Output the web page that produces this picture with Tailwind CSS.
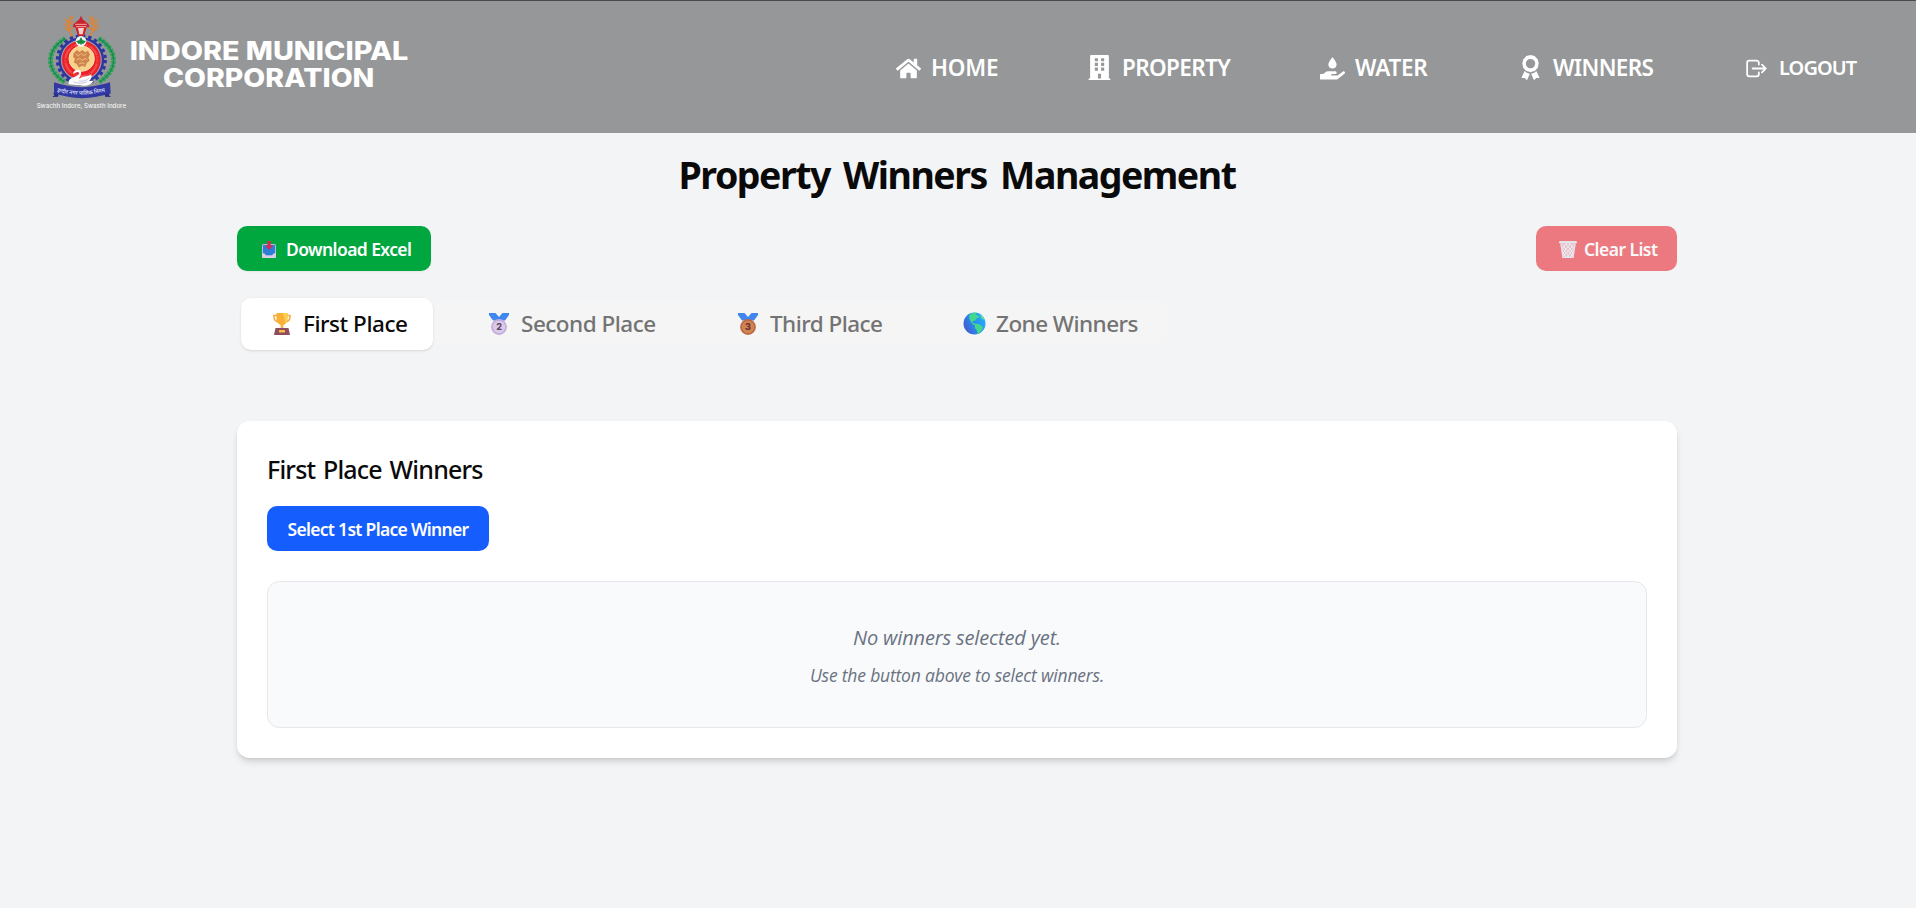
<!DOCTYPE html>
<html lang="en">
<head>
<meta charset="utf-8">
<title>Property Winners Management</title>
<script src="https://cdn.jsdelivr.net/npm/@tailwindcss/browser@4"></script>
</head>
<body class="min-h-screen overflow-hidden bg-gray-100 font-['Noto_Sans','Open_Sans',sans-serif] text-neutral-950">

<header class="flex h-[133px] items-center justify-between border-t border-[#4b4b4d] bg-[#969798] pr-[59px] pl-5 font-semibold text-white">
  <svg class="h-[132px] w-[400px] shrink-0" viewBox="0 3 1200 396" role="img" aria-label="Indore Municipal Corporation">
    <!-- wheat ears -->
    <g fill="none" stroke="#d9853b" stroke-width="5" stroke-linecap="round">
      <path d="M155 108Q140 80 152 50M146 92l-10-9M144 80l-10-9M145 68l-8-10M148 92l12-10M146 76l12-10M149 62l9-10"/>
      <path d="M211 108Q230 80 216 50M222 92l11-9M224 80l10-9M223 68l8-10M219 92l-12-10M221 76l-12-10M218 62l-9-10"/>
    </g>
    <!-- laurel -->
    <g fill="none" stroke="#2fa45c" stroke-width="15" stroke-dasharray="9 3">
      <path d="M136 116C82 146 72 206 134 246"/>
      <path d="M236 116C290 146 300 206 238 246"/>
    </g>
    <g fill="none" stroke="#168a49" stroke-width="4">
      <path d="M136 116C82 146 72 206 134 246M236 116C290 146 300 206 238 246"/>
    </g>
    <!-- gear and rings -->
    <circle cx="184" cy="180" r="72" fill="none" stroke="#2e35a0" stroke-width="9" stroke-dasharray="10 8.85"/>
    <circle cx="184" cy="180" r="65" fill="#9a9bb0" stroke="#2e35a0" stroke-width="7"/>
    <circle cx="184" cy="180" r="58" fill="#ee2027"/>
    <circle cx="184" cy="180" r="48" fill="none" stroke="#f7b0a4" stroke-width="6" stroke-dasharray="4 3 2 2 30 0 4 3" opacity=".3"/>
    <circle cx="185" cy="176" r="38" fill="#f6d28a" stroke="#f7e3b0" stroke-width="3"/>
    <path d="M161 160l10-10 8 6 8-6 8 7 9-5 6 12-5 9 4 9-9 7-4 12-10-4-9 6-7-11-9-5 4-10-6-7z" fill="#cf8450"/>
    <path d="M168 162l7 6 8-8 8 7 9-6M170 180l9-5 8 6 9-6 6 5M177 192l9-4 8 4" fill="none" stroke="#f1c079" stroke-width="3"/>
    <circle cx="183" cy="124" r="16" fill="#f4f5f2"/>
    <path d="M183 111l5 10 10 2-7 8h-16l-7-8 10-2z" fill="#158b45"/>
    <path d="M183 125v10" stroke="#158b45" stroke-width="3"/>
    <!-- lantern -->
    <path d="M183 47l5 11 17 14 4 9-9 1-8 26h-18l-8-26-8-1 3-9 17-14z" fill="#c9232e"/>
    <path d="M166 73h34M168 80h31" stroke="#f0aaa9" stroke-width="3"/>
    <path d="M174 84h18l-4 19h-10z" fill="#f5cfcb"/>
    <!-- swan -->
    <path d="M146 253c-3-18 13-20 24-25 9-5 9-11 3-12-5 0-6 4-14 5 2-12 17-15 23-7 5 9-4 16-4 22 14-10 26-5 36-13 2 11-2 17-7 20l13-1c-3 9-16 15-28 15z" fill="#fdfdff"/>
    <path d="M177 243c10 2 22-1 29-8M160 245c10 6 30 6 42 0" fill="none" stroke="#b6bbd9" stroke-width="2.500"/>
    <!-- ribbon -->
    <path d="M99 280l16-4v14l-18 1 7-6zM271 280l-16-4v14l18 1-7-6z" fill="#242b87"/>
    <path d="M102 247q82 29 168 0l2 33q-86 29-170 0z" fill="#3138a3"/>
    <path id="ribbon" d="M111 275q74 19 148-1" fill="none"/>
    <text font-family="Noto Sans, sans-serif" font-weight="600" font-size="17" fill="#d5d8f2"><textPath href="#ribbon" textLength="146" lengthAdjust="spacingAndGlyphs">इन्दौर नगर पालिक निगम</textPath></text>
    <text x="50" y="323" textLength="268" lengthAdjust="spacingAndGlyphs" font-family="Inter, sans-serif" font-weight="500" font-size="18" fill="#f3f3f3">Swachh Indore, Swasth Indore</text>
    <g font-family="Inter, sans-serif" font-weight="800" font-size="76.500" fill="#fff">
      <text x="329" y="180" textLength="836" lengthAdjust="spacingAndGlyphs">INDORE MUNICIPAL</text>
      <text x="429" y="262" textLength="634" lengthAdjust="spacingAndGlyphs">CORPORATION</text>
    </g>
  </svg>

  <nav class="flex items-center gap-[89px] text-[22.5px] leading-[34px] whitespace-nowrap">
    <a class="flex w-[102px] items-center gap-2.5">
      <svg class="mt-0.5 size-[25px] shrink-0" viewBox="0 0 576 512" fill="currentColor"><path d="M280.370 148.260L96 300.110V464a16 16 0 0 0 16 16l112.060-.29a16 16 0 0 0 15.920-16V368a16 16 0 0 1 16-16h64a16 16 0 0 1 16 16v95.640a16 16 0 0 0 16 16.050L464 480a16 16 0 0 0 16-16V300L295.670 148.260a12.190 12.190 0 0 0-15.300 0zM571.600 251.470L488 182.560V44.050a12 12 0 0 0-12-12h-56a12 12 0 0 0-12 12v72.610L318.470 43a48 48 0 0 0-61 0L4.340 251.470a12 12 0 0 0-1.600 16.900l25.500 31A12 12 0 0 0 45.150 301l235.220-193.740a12.190 12.190 0 0 1 15.300 0L530.900 301a12 12 0 0 0 16.900-1.600l25.500-31a12 12 0 0 0-1.700-16.930z"/></svg>
      <span class="pt-0.5 tracking-[-0.21px]">HOME</span>
    </a>
    <a class="flex w-[144px] items-center gap-2.5">
      <svg class="size-[25px] shrink-0" viewBox="0 0 448 512" fill="currentColor" fill-rule="evenodd"><path d="M436 480h-20V24c0-13.300-10.700-24-24-24H56C42.700 0 32 10.700 32 24v456H12c-6.600 0-12 5.400-12 12v20h448v-20c0-6.600-5.400-12-12-12zM128 64h64v64h-64zM256 64h64v64h-64zM128 160h64v64h-64zM256 160h64v64h-64zM128 256h64v64h-64zM256 256h64v64h-64zM192 384h64v96h-64z"/></svg>
      <span class="pt-0.5 tracking-[-0.63px]">PROPERTY</span>
    </a>
    <a class="flex w-[109px] items-center gap-2.5">
      <svg class="mt-0.5 size-[25px] shrink-0" viewBox="0 0 576 512" fill="currentColor"><path d="M288 256c53 0 96-42.100 96-94 0-40-57.100-120.700-83.200-155.600-6.400-8.500-19.200-8.500-25.600 0C249.100 41.300 192 122 192 162c0 51.900 43 94 96 94zm277.300 72.100c-11.800-10.700-30.200-10-42.600 0L430.300 402c-11.300 9.100-25.400 14-40 14H272c-8.800 0-16-7.200-16-16s7.200-16 16-16h78.300c16 0 30.700-10.900 33.300-26.600 3.200-20-12.100-37.400-31.600-37.400H192c-27 0-53.100 9.300-74.100 26.300L71.400 384H16c-8.800 0-16 7.200-16 16v96c0 8.800 7.200 16 16 16h356.800c14.500 0 28.600-4.900 40-14L564 377c15.200-12.100 16.400-35.300 1.300-48.900z"/></svg>
      <span class="pt-0.5 tracking-[-0.3px]">WATER</span>
    </a>
    <a class="flex w-[137px] items-center gap-2.5">
      <svg class="size-[25px] shrink-0" viewBox="0 0 384 512" fill="currentColor"><path fill-rule="evenodd" d="M192 0l42 12 44 11 30 32 31 32 11 43 11 46-11 46-11 43-31 32-30 32-44 11-42 12-42-12-44-11-30-32-31-32-11-43-11-46 11-46 11-43 31-32 30-32 44-11zM192 80a96 96 0 1 0 0 192 96 96 0 1 0 0-192z"/><path d="M72 328l40 36 66 18-50 122c-3 9-12 10-18 3l-35-37-50 2c-11 1-17-8-13-18zM312 328l-40 36-66 18 50 122c3 9 12 10 18 3l35-37 50 2c11 1 17-8 13-18z"/></svg>
      <span class="pt-0.5 tracking-[-0.66px]">WINNERS</span>
    </a>
    <a class="flex w-[113px] items-center gap-2.5 text-xl leading-[34px]">
      <svg class="mt-0.5 size-[25px] shrink-0" viewBox="0 0 512 512" fill="none" stroke="currentColor" stroke-width="36" stroke-linecap="round" stroke-linejoin="round"><path d="M304 336v40a40 40 0 0 1-40 40H104a40 40 0 0 1-40-40V136a40 40 0 0 1 40-40h152c22 0 48 18 48 40v40M368 336l80-80-80-80M176 256h256"/></svg>
      <span class="pt-px tracking-[-0.92px]">LOGOUT</span>
    </a>
  </nav>
</header>

<main class="ml-[237px] w-[1440px] pt-[19px] whitespace-nowrap">
  <h1 class="text-center text-[37.5px] leading-[45px] font-bold tracking-[-1.5px] [word-spacing:5px]">Property Winners Management</h1>

  <div class="mt-[29px] flex justify-between text-[17.5px] leading-[25px] font-semibold text-white">
    <button class="flex h-[45px] w-[194px] items-center gap-2.5 rounded-[10px] bg-[#00a63e] pl-[25px] shadow-xs">
      <svg class="mt-0.5 h-[17px] w-[14px] shrink-0" viewBox="0 0 14 17">
        <rect x="0" y="3" width="14" height="14" rx="1.500" fill="#c5b5d8"/>
        <path d="M1 4h12v8l-2.500 2.500h-7L1 12z" fill="#2b7fd8"/>
        <path d="M0 12.500h2.500L4 14.500h6l1.500-2H14V15.500a1.500 1.500 0 0 1-1.500 1.500h-11A1.500 1.500 0 0 1 0 15.500z" fill="#d9cde8"/>
        <path d="M5.500 0h3.200v4.500H11L7.100 9 3.200 4.500h2.300z" fill="#d62a50"/>
      </svg>
      <span class="pt-0.5 tracking-[-0.59px]">Download Excel</span>
    </button>
    <button class="flex h-[45px] w-[141px] items-center gap-[7px] rounded-[10px] bg-[#e7000b] pl-[23px] opacity-50">
      <svg class="mt-0.5 h-[17px] w-[18px] shrink-0" viewBox="0 0 18 17">
        <path d="M1.500 2h15l-2 15h-11z" fill="#c9bfd2" fill-opacity=".75"/>
        <path d="M3.500 4l3.500 4-3 4 3.500 4.500M7 3l4 5-3.500 4.500 3 4M11 3l3.500 4-3.500 5 2.500 3M14.500 4L11 8l2.800 4-2.300 4M11 3L7 8l4 4.500-3.500 4M7 3L3.500 7 7 12l-2.500 3" fill="none" stroke="#f4f1f7" stroke-width=".9"/>
        <path d="M2 3l2 13.500h10L16 3" fill="none" stroke="#dcd6e2" stroke-width="1.300"/>
        <rect x="0" y="0" width="18" height="2.500" rx="1.200" fill="#d8d2de"/>
      </svg>
      <span class="pt-0.5 tracking-[-0.55px]">Clear List</span>
    </button>
  </div>

  <div class="mt-[30px] flex h-[45px] w-[931px] items-center gap-6 rounded-[12.5px] bg-neutral-100 pl-1 text-[22.5px] leading-8 font-medium text-neutral-500">
    <button class="flex h-[52px] w-48 shrink-0 items-center gap-3 rounded-[10px] bg-white pl-8 text-neutral-950 shadow-sm">
      <svg class="h-[22px] w-[18px] shrink-0" viewBox="0 0 18 22">
        <path d="M4 2.500H1Q.5 8 5.500 9M14 2.500h3Q17.500 8 12.500 9" fill="none" stroke="#f9a63a" stroke-width="1.500"/>
        <path d="M3.500 0h11v5.500c0 4-2.500 6-4.200 6.500v3h-2.600v-3C6 11.500 3.500 9.500 3.500 5.500z" fill="#f9b035"/>
        <path d="M9.500 0h5v5.500c0 2.500-1 4.500-2.500 5.500 0-4-1-8-2.500-11z" fill="#fbd052"/>
        <path d="M2.500 15h13L17 22H1z" fill="#8f4c5d"/>
        <rect x="6" y="17" width="6" height="2.500" rx=".5" fill="#f6c04c"/>
      </svg>
      <span class="tracking-[-0.46px]">First Place</span>
    </button>
    <button class="flex h-[52px] w-[225px] shrink-0 items-center gap-3 pl-8">
      <svg class="h-[22px] w-5 shrink-0" viewBox="0 0 20 22">
        <path d="M0 0h6.500L10 4l3.500-4H20v2l-4 5.500H4L0 2z" fill="#3f87ee"/>
        <circle cx="10" cy="14" r="7.900" fill="#c5a9df"/><circle cx="10" cy="14" r="6.200" fill="#d9cbe6"/>
        <text x="10" y="17.400" text-anchor="middle" font-family="Inter, sans-serif" font-weight="800" font-size="9" fill="#5c4868">2</text>
      </svg>
      <span class="tracking-[-0.5px]">Second Place</span>
    </button>
    <button class="flex h-[52px] w-[201px] shrink-0 items-center gap-3 pl-8">
      <svg class="h-[22px] w-5 shrink-0" viewBox="0 0 20 22">
        <path d="M0 0h6.500L10 4l3.500-4H20v2l-4 5.500H4L0 2z" fill="#3f87ee"/>
        <circle cx="10" cy="14" r="7.900" fill="#bd6a45"/><circle cx="10" cy="14" r="6.200" fill="#cf8550"/>
        <text x="10" y="17.400" text-anchor="middle" font-family="Inter, sans-serif" font-weight="800" font-size="9" fill="#6f3036">3</text>
      </svg>
      <span class="tracking-[-0.54px]">Third Place</span>
    </button>
    <button class="flex h-[52px] w-[233px] shrink-0 items-center gap-2.5 pl-8">
      <svg class="size-[23px] shrink-0" viewBox="0 0 23 23">
        <defs><linearGradient id="sea" x1="1" y1=".3" x2="0" y2=".8"><stop offset="0" stop-color="#22b2ff"/><stop offset=".6" stop-color="#2f7fe8"/><stop offset="1" stop-color="#4a55c8"/></linearGradient></defs>
        <circle cx="11.500" cy="11.500" r="11" fill="url(#sea)"/>
        <path d="M8 1.500C10 .6 12 .5 14 .8l-1.500 1.900 3 .8.5 2-2.500 1-1 2-2.500.5-.5 1.500 2 1 3 .3 3.500 1.500 2 2-1.500 3.500-2.500 2.700-1.500.5-.8-4-2-2.200.3-2.500-2.500-1.300-1.700-2.500L6.500 7 6 4z" fill="#43d68f"/>
        <path d="M16.500 2l3.500 2.800L21.500 8l-3-1.500z" fill="#5be39a"/>
      </svg>
      <span class="tracking-[-0.54px]">Zone Winners</span>
    </button>
  </div>

  <section class="mt-[75px] h-[337px] rounded-[12.5px] bg-white p-[30px] shadow-[0_5px_7px_-1px_rgba(0,0,0,0.12),0_2px_5px_-2px_rgba(0,0,0,0.12)]">
    <h2 class="text-[25px] leading-9 font-medium tracking-[-0.8px] [word-spacing:2px]">First Place Winners</h2>
    <button class="mt-[19px] flex h-[45px] w-[222px] items-center justify-center rounded-[10px] bg-[#155dfc] text-[17.5px] leading-[25px] font-semibold text-white"><span class="pt-px tracking-[-0.7px]">Select 1st Place Winner</span></button>
    <div class="mt-[30px] h-[147px] rounded-[12.5px] border border-gray-200 bg-gray-50 pt-[41px] text-center font-['Open_Sans','Noto_Sans',sans-serif] text-gray-500 italic">
      <p class="text-xl leading-[30px] tracking-[-0.14px]">No winners selected yet.</p>
      <p class="mt-2.5 text-[17.5px] leading-[25px] tracking-[-0.19px]">Use the button above to select winners.</p>
    </div>
  </section>
</main>
</body>
</html>
